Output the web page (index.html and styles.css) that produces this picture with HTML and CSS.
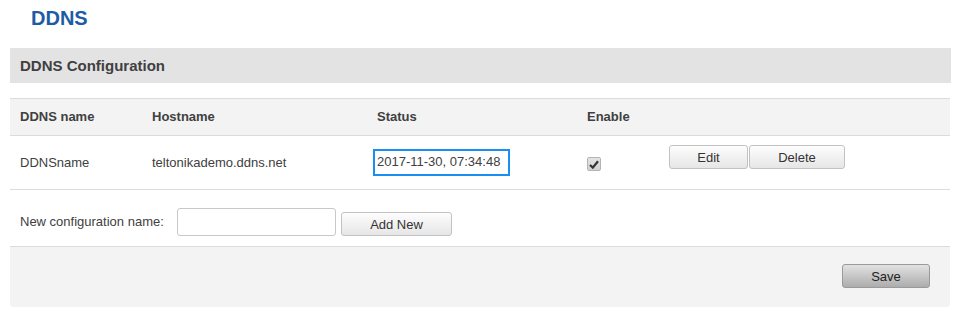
FILE: index.html
```html
<!DOCTYPE html>
<html lang="en">
<head>
  <meta charset="UTF-8">
  <title>DDNS</title>
  <link rel="stylesheet" href="styles.css">
</head>
<body>
  <h1 class="page-title">DDNS</h1>

  <div class="section">
    <h2 class="section-title">DDNS Configuration</h2>

    <table class="table">
      <thead>
        <tr>
          <th class="col-name">DDNS name</th>
          <th class="col-host">Hostname</th>
          <th class="col-status">Status</th>
          <th class="col-enable">Enable</th>
          <th></th>
        </tr>
      </thead>
      <tbody>
        <tr>
          <td>DDNSname</td>
          <td>teltonikademo.ddns.net</td>
          <td class="status-cell"><span class="status-box">2017-11-30, 07:34:48</span></td>
          <td><span class="checkbox">
            <svg width="10" height="9" viewBox="0 0 10 9"><path d="M1 5 L3.8 7.6 L9 1.2" fill="none" stroke="#333" stroke-width="2.2"/></svg>
          </span></td>
          <td class="actions">
            <div class="btn-group">
              <button class="btn btn-edit">Edit</button>
              <button class="btn btn-delete">Delete</button>
            </div>
          </td>
        </tr>
      </tbody>
    </table>

    <div class="new-row">
      <label for="newname">New configuration name:</label>
      <input type="text" id="newname">
      <button class="btn btn-add">Add New</button>
    </div>

    <div class="footer">
      <button class="btn-save">Save</button>
    </div>
  </div>
</body>
</html>
```

FILE: styles.css
```css
body {
  font-family: "Liberation Sans", Arial, sans-serif;
  font-size: 13px;
  color: #404040;
  background-color: #fff;
  margin: 0;
  padding: 0;
}

.page-title {
  margin: 0 0 18px;
  padding: 7px 31px 0;
  font-size: 20px;
  line-height: 23px;
  font-weight: bold;
  color: #1d5ca4;
}

.section {
  margin: 0 10px;
  width: 941px;
}

.section-title {
  margin: 0 0 15px;
  padding: 0 10px;
  height: 35px;
  line-height: 35px;
  font-size: 15px;
  font-weight: bold;
  background-color: #e3e3e3;
  color: #404040;
}

.table {
  width: 940px;
  border-collapse: separate;
  border-spacing: 0;
  border-top: 1px solid #dcdcdc;
  table-layout: fixed;
}

.table th {
  background-color: #f3f3f3;
  text-align: left;
  font-weight: bold;
  padding: 10px 10px;
  line-height: 16px;
  border-bottom: 1px solid #dcdcdc;
}

.col-name { width: 112px; }
.col-host { width: 205px; }
.col-status { width: 190px; }
.col-enable { width: 62px; }

.table td {
  padding: 13px 10px;
  line-height: 27px;
  border-bottom: 1px solid #dcdcdc;
  vertical-align: middle;
  white-space: nowrap;
}

.table td.status-cell {
  padding-left: 6px;
}

.status-box {
  display: inline-block;
  box-sizing: border-box;
  height: 27px;
  line-height: 22px;
  padding: 0 8px 0 2px;
  border: 2px solid #1b8ef2;
  vertical-align: top;
}

.checkbox {
  display: inline-block;
  box-sizing: border-box;
  width: 14px;
  height: 14px;
  border: 1px solid #b4b4b4;
  border-radius: 2px;
  background: linear-gradient(#e4e4e4, #d0d0d0);
  vertical-align: middle;
  margin-top: 1px;
  line-height: 0;
  text-align: center;
}

.checkbox svg {
  margin-top: 2px;
}

.table td.actions {
  vertical-align: top;
  padding-top: 9px;
}

.btn-group {
  display: flex;
  gap: 1px;
}

.btn {
  font-family: "Liberation Sans", Arial, sans-serif;
  font-size: 13px;
  color: #333;
  background: linear-gradient(#fdfdfd, #e6e6e6);
  border: 1px solid #c2c2c2;
  border-radius: 3px;
  padding: 0;
  cursor: pointer;
}

.btn-edit {
  width: 79px;
  height: 24px;
}

.btn-delete {
  width: 96px;
  height: 24px;
}

.new-row {
  display: flex;
  align-items: center;
  padding: 18px 10px 10px;
}

.new-row label {
  width: 157px;
  line-height: 16px;
}

.new-row input {
  box-sizing: border-box;
  width: 159px;
  height: 28px;
  border: 1px solid #c8c8c8;
  border-radius: 3px;
  margin: 0;
}

.btn-add {
  width: 111px;
  height: 24px;
  margin-left: 5px;
  align-self: flex-end;
}

.footer {
  display: flex;
  justify-content: flex-end;
  background-color: #f3f3f3;
  border-top: 1px solid #dcdcdc;
  border-radius: 0 0 4px 4px;
  padding: 17px 20px 19px;
  width: 900px;
}

.btn-save {
  font-family: "Liberation Sans", Arial, sans-serif;
  font-size: 13px;
  color: #222;
  width: 88px;
  height: 24px;
  padding: 0;
  border: 1px solid #9a9a9a;
  border-radius: 3px;
  background: linear-gradient(#e2e2e2, #acacac);
  cursor: pointer;
}
```
